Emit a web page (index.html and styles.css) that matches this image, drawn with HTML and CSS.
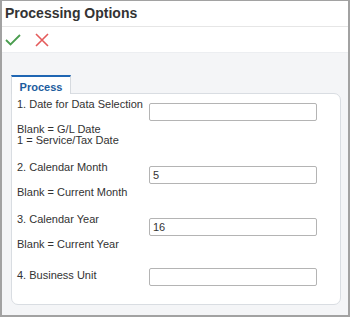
FILE: index.html
```html
<!DOCTYPE html>
<html>
<head>
  <title>Processing Options</title>
  <link rel="stylesheet" href="styles.css">
</head>
<body>
  <div class="dialog">
    <div class="dialog-title">Processing Options</div>
    <div class="toolbar">
      <button class="tool" title="OK">
        <svg width="16" height="14" viewBox="0 0 16 14">
          <polyline points="1,7 5.5,11.5 15,2" fill="none" stroke="#4a9d4f" stroke-width="1.8"/>
        </svg>
      </button>
      <button class="tool" title="Cancel">
        <svg width="14" height="14" viewBox="0 0 14 14">
          <path d="M1 1 L13 13 M13 1 L1 13" fill="none" stroke="#e45b5b" stroke-width="1.6"/>
        </svg>
      </button>
    </div>

    <div class="content">
      <div class="tabs">
        <div class="tab active">Process</div>
      </div>
      <div class="panel">
        <div class="field">
          <div class="field-label">
            <div class="label">1. Date for Data Selection</div>
            <div class="note">Blank = G/L Date<br>1 = Service/Tax Date</div>
          </div>
          <input class="field-input" type="text" value="">
        </div>

        <div class="field">
          <div class="field-label">
            <div class="label">2. Calendar Month</div>
            <div class="note">Blank = Current Month</div>
          </div>
          <input class="field-input" type="text" value="5">
        </div>

        <div class="field">
          <div class="field-label">
            <div class="label">3. Calendar Year</div>
            <div class="note">Blank = Current Year</div>
          </div>
          <input class="field-input" type="text" value="16">
        </div>

        <div class="field field-plain">
          <div class="field-label">
            <div class="label">4. Business Unit</div>
          </div>
          <input class="field-input" type="text" value="">
        </div>
      </div>
    </div>
  </div>
</body>
</html>
```

FILE: styles.css
```css
html, body {
  margin: 0;
  padding: 0;
}
body {
  font-family: "Liberation Sans", Arial, sans-serif;
  color: #333;
  background: #fff;
}
.dialog {
  width: 350px;
  height: 317px;
  box-sizing: border-box;
  border: 2px solid #a2a2a2;
  border-top-width: 1px;
  display: flex;
  flex-direction: column;
  background: #fff;
}
.dialog-title {
  height: 25px;
  line-height: 25px;
  padding-left: 3px;
  font-size: 14px;
  font-weight: bold;
  color: #333;
  border-bottom: 1px solid #e6e6e6;
}
.toolbar {
  height: 25px;
  display: flex;
  align-items: center;
  gap: 14px;
  padding-left: 3px;
  border-bottom: 1px solid #eceef1;
}
.tool {
  border: none;
  background: none;
  padding: 0;
  margin: 0;
  display: flex;
  cursor: pointer;
}
.content {
  flex: 1;
  background: #f4f5f7;
  padding: 22px 7px 10px 9px;
  display: flex;
  flex-direction: column;
}
.tabs {
  display: flex;
}
.tab {
  position: relative;
  z-index: 1;
  width: 58px;
  padding-top: 3px;
  line-height: 14px;
  text-align: center;
  font-size: 11px;
  font-weight: bold;
  color: #1d5d9e;
  background: #fff;
  border: 1px solid #d6dadf;
  border-top: 2px solid #1f66b3;
  border-bottom: none;
  margin-bottom: -1px;
}
.panel {
  flex: 1;
  background: #fff;
  border: 1px solid #d9dde2;
  border-radius: 0 7px 7px 7px;
  padding: 4px 5px 0 5px;
}
.field {
  display: flex;
  margin-top: 15px;
  font-size: 11px;
}
.field:first-child {
  margin-top: 0;
}
.field-label {
  width: 132px;
}
.label {
  line-height: 13px;
}
.note {
  margin-top: 13px;
  line-height: 11px;
}
.field-input {
  width: 168px;
  height: 18px;
  box-sizing: border-box;
  margin: 5px 0 0 0;
  padding: 0 3px;
  border: 1px solid #b4b4b4;
  border-radius: 2px;
  font-family: "Liberation Sans", Arial, sans-serif;
  font-size: 11px;
  color: #333;
  background: #fff;
}
.field-plain {
  margin-top: 19px;
}
.field-plain .field-input {
  margin-top: -1px;
}
```
